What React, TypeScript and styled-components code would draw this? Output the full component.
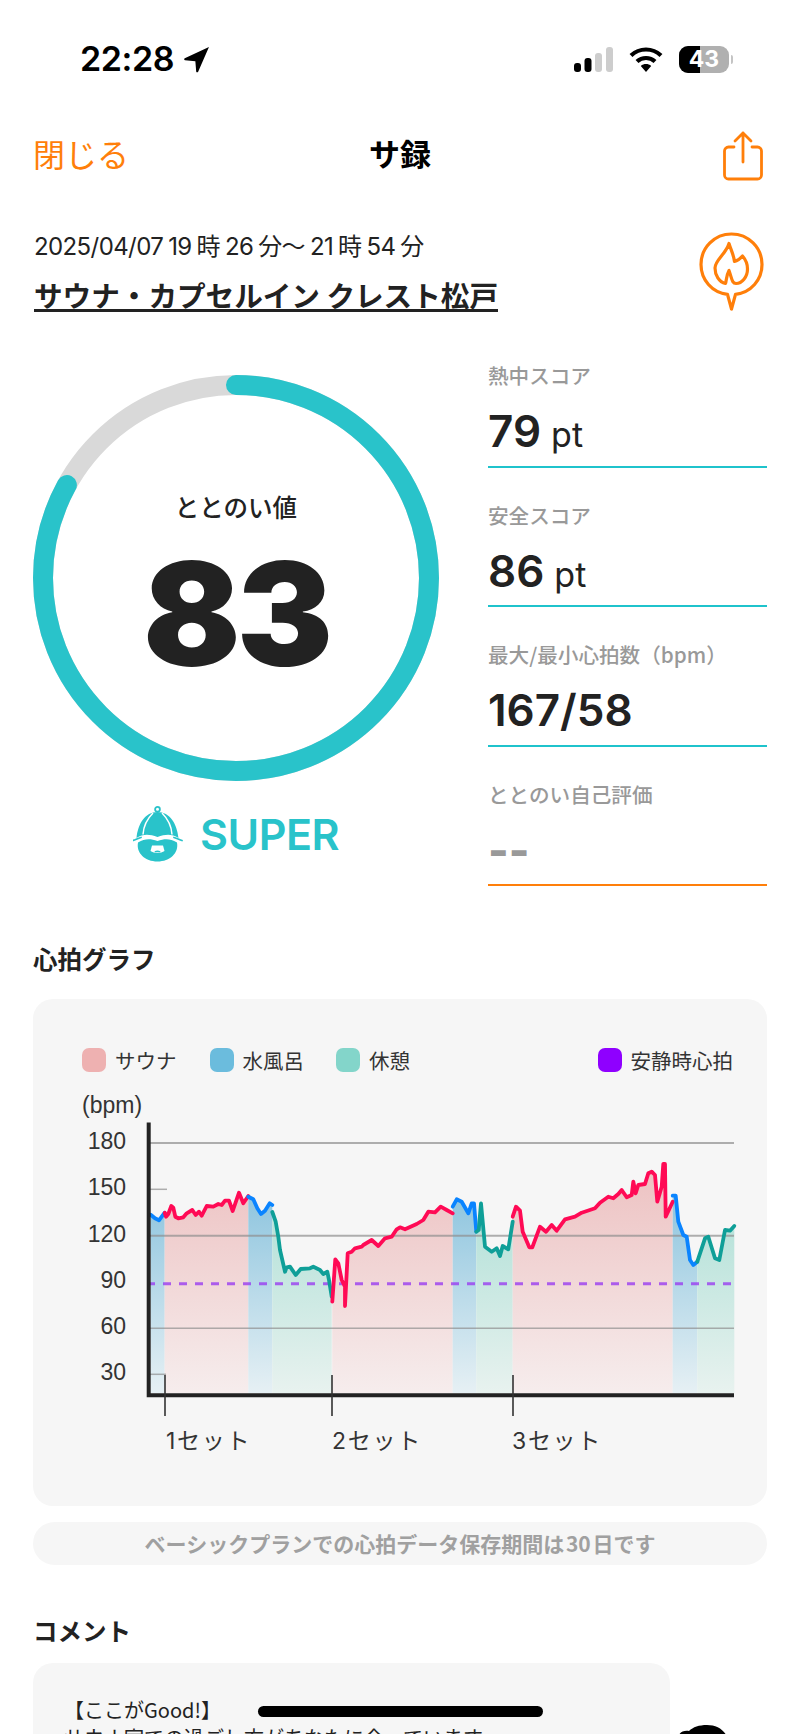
import React from "react";
import styled, { createGlobalStyle } from "styled-components";

const TEAL = "#29c3ca";
const ORANGE = "#ff7f0a";
const FONT = `"Inter", "Noto Sans CJK JP", sans-serif`;
const CJK = `"Noto Sans CJK JP", "Inter", sans-serif`;

const Global = createGlobalStyle`
  html, body { margin: 0; padding: 0; background: #fff; }
  body { font-family: ${FONT}; color: #222; }
  #root { height: 1734px; overflow: hidden; }
`;

const Page = styled.div`
  width: 800px;
  height: 1734px;
  overflow: hidden;
  background: #fff;
`;

const StatusBar = styled.div`
  height: 118px;
  display: flex;
  align-items: center;
  padding: 0 67px 0 80px;
  box-sizing: border-box;
`;
const Time = styled.div`
  font: 600 34px/40px "Inter", sans-serif;
  color: #000;
  letter-spacing: -0.4px;
`;
const LocationIcon = styled.svg`
  width: 27px;
  height: 27px;
  margin-left: 9px;
`;
const StatusRight = styled.div`
  margin-left: auto;
  display: flex;
  align-items: center;
  gap: 16px;
`;
const Battery = styled.div`
  position: relative;
  width: 50px;
  height: 27px;
  border-radius: 9px;
  overflow: hidden;
  background: #b0b0b0;
  display: flex;
  align-items: center;
  justify-content: center;
  font: 700 23px/27px "Inter", sans-serif;
  color: #fff;
  &::before {
    content: "";
    position: absolute;
    left: 0;
    top: 0;
    bottom: 0;
    width: 21px;
    background: #000;
  }
`;
const BatteryText = styled.span`
  position: relative;
`;
const BatteryWrap = styled.div`
  display: flex;
  align-items: center;
  gap: 2px;
  &::after {
    content: "";
    width: 2px;
    height: 9px;
    background: #c4c4c4;
    border-radius: 0 2px 2px 0;
  }
`;

const Header = styled.header`
  margin-top: 7px;
  height: 60px;
  padding: 0 33px;
  display: grid;
  grid-template-columns: 1fr auto 1fr;
  align-items: center;
`;
const CloseLink = styled.div`
  margin-bottom: 4px;
  font: 400 32px/44px ${CJK};
  color: ${ORANGE};
`;
const NavTitle = styled.h1`
  margin: 0 0 4px;
  font: 700 31px/44px ${CJK};
  color: #000;
`;
const ShareIcon = styled.svg`
  justify-self: end;
  width: 44px;
  height: 52px;
  margin-right: 2px;
  margin-top: 2px;
`;

const Info = styled.section`
  margin-top: 47px;
  padding: 0 33px;
  display: flex;
  justify-content: space-between;
`;
const InfoText = styled.div`
  padding-left: 1px;
`;
const DateLine = styled.div`
  font: 400 24px/30px ${FONT};
  color: #222;
  letter-spacing: -0.6px;
  word-spacing: -1.2px;
`;
const Place = styled.div`
  display: inline-block;
  margin-top: 19px;
  font: 700 28.6px/28px ${CJK};
  color: #222;
  border-bottom: 3px solid #222;
`;
const PinIcon = styled.svg`
  width: 70px;
  height: 80px;
  margin-right: -2px;
`;

const Main = styled.section`
  margin-top: 16px;
  padding: 0 33px;
  display: flex;
  justify-content: space-between;
`;
const RingColumn = styled.div`
  margin-top: 47px;
  width: 406px;
  display: flex;
  flex-direction: column;
  align-items: center;
`;
const RingWrap = styled.div`
  position: relative;
  width: 406px;
  height: 406px;
`;
const RingText = styled.div`
  position: absolute;
  inset: 0;
  display: flex;
  flex-direction: column;
  align-items: center;
`;
const RingLabel = styled.div`
  margin-top: 114px;
  font: 500 24.5px/36px ${CJK};
  color: #222;
`;
const RingValue = styled.div`
  margin-top: 4px;
  font: 900 144px/170px "Inter", sans-serif;
  color: #222;
  letter-spacing: -4px;
`;
const Rank = styled.div`
  margin-top: 25px;
  display: flex;
  align-items: center;
  gap: 17px;
  font: 600 43px/56px "Inter", sans-serif;
  letter-spacing: -0.5px;
  color: ${TEAL};
`;
const RankIcon = styled.svg`
  width: 50px;
  height: 56px;
`;

const Scores = styled.div`
  width: 279px;
`;
const ScoreRow = styled.div<{ $accent: string }>`
  height: 139.6px;
  box-sizing: border-box;
  padding-top: 33px;
  border-bottom: 2px solid ${(p) => p.$accent};
`;
const ScoreLabel = styled.div`
  font: 500 20.6px/28px ${CJK};
  color: #999;
`;
const ScoreValue = styled.div`
  margin-top: 16px;
  font: 600 44px/52px "Inter", sans-serif;
  color: #222;
`;
const ScoreUnit = styled.span`
  font-size: 34px;
  font-weight: 400;
  margin-left: 10px;
`;
const ScoreEmpty = styled.div`
  margin-top: 16px;
  font: 800 44px/52px "Inter", sans-serif;
  color: #999;
`;

const SectionTitle = styled.h2<{ $top: number }>`
  margin: ${(p) => p.$top}px 33px 0;
  font: 700 24.5px/30px ${CJK};
  color: #222;
`;
const GraphCard = styled.section`
  margin: 25px 33px 0;
  height: 507px;
  box-sizing: border-box;
  padding: 49px 34px 0 49px;
  background: #f6f6f6;
  border-radius: 20px;
`;
const Legend = styled.div`
  display: flex;
  align-items: center;
  height: 24px;
`;
const LegendItem = styled.div<{ $push?: boolean; $gap?: number }>`
  display: flex;
  align-items: center;
  gap: 9px;
  margin-left: ${(p) => (p.$push ? "auto" : `${p.$gap ?? 0}px`)};
  font: 400 20.5px/24px ${CJK};
  color: #333;
  white-space: nowrap;
`;
const Swatch = styled.span<{ $color: string }>`
  width: 24px;
  height: 24px;
  border-radius: 7px;
  background: ${(p) => p.$color};
`;
const ChartSvg = styled.svg`
  display: block;
  margin-top: 18px;
  width: 660px;
  height: 375px;
  overflow: visible;
`;
const AxisText = styled.text`
  font: 400 23px "Liberation Sans", sans-serif;
  fill: #333;
`;
const SetText = styled.text`
  font: 400 23px ${FONT};
  fill: #333;
  letter-spacing: 1.7px;
`;

const Notice = styled.div`
  margin: 16px 33px 0;
  height: 43px;
  border-radius: 22px;
  background: #f6f6f6;
  display: flex;
  align-items: center;
  justify-content: center;
  font: 700 21px/43px ${CJK};
  color: #a0a0a0;
  word-spacing: -3px;
`;

const CommentRow = styled.div`
  margin: 17px 0 0 33px;
  display: flex;
  gap: 5px;
`;
const CommentCard = styled.div`
  position: relative;
  width: 637px;
  box-sizing: border-box;
  padding: 33px 20px 40px 31px;
  background: #f6f6f6;
  border-radius: 20px;
  font: 400 20px/28px ${CJK};
  color: #222;
`;
const Redaction = styled.span`
  position: absolute;
  left: 225px;
  top: 43px;
  width: 285px;
  height: 11px;
  border-radius: 6px;
  background: #000;
`;
const Avatar = styled.svg`
  width: 56px;
  height: 56px;
  margin-top: 62px;
`;

type P = [number, number];
const z4 = (a: P[]): P[] => a.map(([x, y]) => [30 + x / 3, 1040 + y / 3]);
const z5 = (a: P[]): P[] => a.map(([x, y]) => [400 + x / 3, 1040 + y / 3]);

const BASE = 1393;
type Kind = "sauna" | "bath" | "rest";
const LINE: Record<Kind, string> = { sauna: "#ff0a55", bath: "#0a84ff", rest: "#0f9f98" };
const segments: { kind: Kind; pts: P[] }[] = [
  { kind: "bath", pts: z4([[362, 524], [375, 535], [387, 541], [395, 530], [404, 518]]) },
  { kind: "sauna", pts: z4([[404, 518], [408, 530], [415, 522], [424, 498], [430, 503], [436, 530], [445, 535], [460, 532], [470, 520], [487, 510], [497, 525], [507, 515], [515, 527], [530, 498], [550, 500], [565, 492], [575, 495], [585, 482], [597, 482], [608, 513], [627, 458], [640, 490], [655, 468]]) },
  { kind: "bath", pts: z4([[655, 470], [670, 478], [682, 505], [693, 522], [705, 512], [719, 490], [727, 495]]) },
  { kind: "rest", pts: z4([[727, 516], [737, 545], [745, 590], [750, 630], [765, 695], [770, 682], [780, 680], [797, 705], [812, 687], [840, 685], [850, 680], [870, 690], [880, 702], [892, 695], [897, 720], [905, 770]]) },
  { kind: "sauna", pts: [...z4([[907, 785], [916, 658], [925, 670], [935, 720], [945, 740], [945, 798], [953, 640], [965, 635], [975, 625], [995, 620], [1000, 615], [1025, 600], [1045, 618], [1065, 595], [1085, 590], [1100, 568], [1110, 562]]), ...z5([[15, 568], [50, 552], [70, 540], [85, 515], [105, 517], [122, 500], [140, 510], [158, 520]])] },
  { kind: "bath", pts: z5([[158, 500], [170, 478], [185, 485], [205, 520], [215, 490], [222, 490], [229, 575]]) },
  { kind: "rest", pts: z5([[229, 575], [236, 570], [243, 490], [255, 620], [275, 635], [290, 625], [300, 648], [308, 618], [325, 628], [338, 545]]) },
  { kind: "sauna", pts: z5([[338, 530], [348, 500], [360, 512], [368, 575], [388, 622], [397, 622], [420, 560], [438, 575], [455, 555], [470, 572], [495, 538], [525, 530], [545, 518], [585, 505], [600, 488], [625, 470], [640, 475], [655, 462], [665, 450], [680, 472], [695, 465], [700, 425], [707, 460], [715, 435], [735, 432], [745, 400], [755, 395], [765, 405], [772, 485], [785, 440], [790, 372], [795, 372], [797, 530], [818, 485]]) },
  { kind: "bath", pts: z5([[818, 467], [827, 467], [835, 545], [850, 585], [860, 590], [870, 660], [880, 675], [892, 665]]) },
  { kind: "rest", pts: z5([[892, 665], [915, 595], [925, 590], [945, 655], [958, 660], [975, 570], [990, 572], [1003, 558]]) },
];
const str = (pts: P[]) => pts.map((p) => p.map((n) => n.toFixed(1)).join(",")).join(" ");

const scores = [
  { label: "熱中スコア", value: "79", unit: "pt" },
  { label: "安全スコア", value: "86", unit: "pt" },
  { label: "最大/最小心拍数（bpm）", value: "167/58" },
];

const ticks = [
  { v: "180", y: 1143, w: 734, s: 2 },
  { v: "150", y: 1189.3, w: 167, s: 1.5 },
  { v: "120", y: 1235.7, w: 734, s: 2 },
  { v: "90", y: 1282, w: 147, s: 0 },
  { v: "60", y: 1328.3, w: 734, s: 1.5 },
  { v: "30", y: 1374.3, w: 166, s: 1.5 },
];

function Chart() {
  return (
    <ChartSvg viewBox="82 1090 660 375">
      <defs>
        <linearGradient id="g-sauna" gradientUnits="userSpaceOnUse" x1="0" y1="1170" x2="0" y2={BASE}>
          <stop offset="0" stopColor="#edc2c2" />
          <stop offset="1" stopColor="#f6eded" />
        </linearGradient>
        <linearGradient id="g-bath" gradientUnits="userSpaceOnUse" x1="0" y1="1190" x2="0" y2={BASE}>
          <stop offset="0" stopColor="#8cc4de" />
          <stop offset="1" stopColor="#e6f0f4" />
        </linearGradient>
        <linearGradient id="g-rest" gradientUnits="userSpaceOnUse" x1="0" y1="1200" x2="0" y2={BASE}>
          <stop offset="0" stopColor="#b0e0d7" />
          <stop offset="1" stopColor="#e8f2ef" />
        </linearGradient>
      </defs>
      {segments.map((s, i) => {
        const a = s.pts[0][0];
        const b = s.pts[s.pts.length - 1][0];
        return <polygon key={i} fill={`url(#g-${s.kind})`} points={`${a},${BASE} ${str(s.pts)} ${b},${BASE}`} />;
      })}
      {ticks.filter((t) => t.s > 0).map((t) => (
        <line key={t.v} x1="147" x2={t.w} y1={t.y} y2={t.y} stroke="#8f8f8f" strokeOpacity="0.7" strokeWidth={t.s} />
      ))}
      <line x1="147" x2="734" y1="1283.7" y2="1283.7" stroke="#9a3df0" strokeOpacity="0.8" strokeWidth="3" strokeDasharray="8 8" />
      {segments.map((s, i) => (
        <polyline key={i} fill="none" stroke={LINE[s.kind]} strokeWidth="3.8" strokeLinejoin="round" strokeLinecap="round" points={str(s.pts)} />
      ))}
      <path d="M148.7 1122.5V1395.3H734" fill="none" stroke="#222" strokeWidth="4" />
      {[165, 332, 513].map((x) => (
        <line key={x} x1={x} x2={x} y1="1375" y2="1416" stroke="#333" strokeWidth="1.6" />
      ))}
      <AxisText x="82" y="1113">(bpm)</AxisText>
      {ticks.map((t) => (
        <AxisText key={t.v} x="126" y={t.y + 6} textAnchor="end">{t.v}</AxisText>
      ))}
      <SetText x="166" y="1449">1セット</SetText>
      <SetText x="332" y="1449">2セット</SetText>
      <SetText x="512" y="1449">3セット</SetText>
    </ChartSvg>
  );
}

export default function App() {
  return (
    <Page>
      <Global />
      <StatusBar>
        <Time>22:28</Time>
        <LocationIcon viewBox="0 0 26 26">
          <path d="M25 1 14.600 24.800c-.4.9-1.800.7-1.900-.3l-.8-9.900-9.900-.8c-1-.1-1.200-1.500-.3-1.900Z" fill="#000" />
        </LocationIcon>
        <StatusRight>
          <svg width="39" height="25" viewBox="0 0 39 25">
            <rect x="0" y="16" width="7" height="9" rx="3" fill="#000" />
            <rect x="10.500" y="11" width="7" height="14" rx="3" fill="#000" />
            <rect x="21" y="6" width="7" height="19" rx="3" fill="#cdcdcd" />
            <rect x="32" y="0" width="7" height="25" rx="3" fill="#cdcdcd" />
          </svg>
          <svg width="34" height="25" viewBox="0 0 34 25">
            <path d="M2 8.500C10.500.5 23.500.5 32 8.500" fill="none" stroke="#000" strokeWidth="4.200" />
            <path d="M8 14.500C13 9.800 21 9.800 26 14.500" fill="none" stroke="#000" strokeWidth="4.200" />
            <path d="M11.800 19 17 25l5.200-6c-3-2.600-7.400-2.600-10.400 0Z" fill="#000" />
          </svg>
          <BatteryWrap>
            <Battery><BatteryText>43</BatteryText></Battery>
          </BatteryWrap>
        </StatusRight>
      </StatusBar>

      <Header>
        <CloseLink>閉じる</CloseLink>
        <NavTitle>サ録</NavTitle>
        <ShareIcon viewBox="0 0 44 52" fill="none" stroke={ORANGE} strokeWidth="2.800" strokeLinecap="round" strokeLinejoin="round">
          <path d="M13 17H7.500a4 4 0 0 0-4 4v24a4 4 0 0 0 4 4h29a4 4 0 0 0 4-4V21a4 4 0 0 0-4-4H31" />
          <path d="M22 32V3M14 11l8-8 8 8" />
        </ShareIcon>
      </Header>

      <Info>
        <InfoText>
          <DateLine>2025/04/07 19 時 26 分〜 21 時 54 分</DateLine>
          <Place>サウナ・カプセルイン クレスト松戸</Place>
        </InfoText>
        <PinIcon viewBox="0 0 70 80" fill="none" stroke={ORANGE} strokeWidth="3.200" strokeLinejoin="round" strokeLinecap="round">
          <path d="M28.500 62.300C13 60.500 2 47.800 2 32.500 2 15.600 15.600 2 32.500 2S63 15.600 63 32.500c0 15.300-11 28-26.500 29.800L32.500 77Z" />
          <path d="M30 11.500C32 18 35 24 35.500 29.500 38 29 41 27 43.500 24 47 28 48.500 33 48.500 37 48.500 45 43 51.500 37 51.500 33 51.500 33 47 30 38.500 27 44 27.500 49 26.500 51.500 20 50 16 43 16 36 16 28 27 22 30 11.500Z" />
        </PinIcon>
      </Info>

      <Main>
        <RingColumn>
          <RingWrap>
            <svg width="406" height="406" viewBox="0 0 406 406">
              <circle cx="203" cy="203" r="193" fill="none" stroke="#d9d9d9" strokeWidth="20" />
              <circle cx="203" cy="203" r="193" fill="none" stroke={TEAL} strokeWidth="20" strokeLinecap="round" pathLength="100" strokeDasharray="83 100" transform="rotate(-90 203 203)" />
            </svg>
            <RingText>
              <RingLabel>ととのい値</RingLabel>
              <RingValue>83</RingValue>
            </RingText>
          </RingWrap>
          <Rank>
            <RankIcon viewBox="0 0 50 56">
              <circle cx="24.500" cy="3.300" r="2.400" fill="none" stroke={TEAL} strokeWidth="1.800" />
              <path d="M24.500 6C12 6 5 18 3.500 32 10 28 16 28 24.500 31 33 28 39 28 45.500 32 44 18 37 6 24.500 6Z" fill={TEAL} />
              <path d="M20 7C14 13 10.500 20 10 28.500M29 7C35 13 38.500 20 39 28.500" fill="none" stroke="#fff" strokeWidth="1.500" />
              <path d="M0 34.500C3 33.500 4.500 32.500 8 31.500M41 31.500C44.500 32.500 46 33.500 49 34.500" fill="none" stroke={TEAL} strokeWidth="1.800" strokeLinecap="round" />
              <path d="M5 36.500C12 32.500 17 32.500 24.500 35 32 32.500 37 32.500 44 36.500 46 47 37 55.500 24.500 55.500 12 55.500 3 47 5 36.500Z" fill={TEAL} />
              <path d="M19 39.500H30L31.500 45C28 47.500 21 47.500 17.500 45Z" fill="#fff" />
              <path d="M21.500 45.200C23.500 44.300 25.500 44.300 27.500 45.200L27 46.300H22Z" fill={TEAL} />
            </RankIcon>
            SUPER
          </Rank>
        </RingColumn>
        <Scores>
          {scores.map((s) => (
            <ScoreRow key={s.label} $accent="#1fc3cc">
              <ScoreLabel>{s.label}</ScoreLabel>
              <ScoreValue>
                {s.value}
                {s.unit && <ScoreUnit>{s.unit}</ScoreUnit>}
              </ScoreValue>
            </ScoreRow>
          ))}
          <ScoreRow $accent={ORANGE}>
            <ScoreLabel>ととのい自己評価</ScoreLabel>
            <ScoreEmpty>--</ScoreEmpty>
          </ScoreRow>
        </Scores>
      </Main>

      <SectionTitle $top={58}>心拍グラフ</SectionTitle>
      <GraphCard>
        <Legend>
          <LegendItem><Swatch $color="#eeb1b1" />サウナ</LegendItem>
          <LegendItem $gap={33}><Swatch $color="#6bbcdd" />水風呂</LegendItem>
          <LegendItem $gap={32}><Swatch $color="#83d5ca" />休憩</LegendItem>
          <LegendItem $push><Swatch $color="#8f00ff" />安静時心拍</LegendItem>
        </Legend>
        <Chart />
      </GraphCard>
      <Notice>ベーシックプランでの心拍データ保存期間は 30 日です</Notice>

      <SectionTitle $top={51}>コメント</SectionTitle>
      <CommentRow>
        <CommentCard>
          【ここがGood!】
          <Redaction />
          <br />
          サウナ室での過ごし方があなたに合っています
        </CommentCard>
        <Avatar viewBox="0 0 56 56">
          <path d="M3 14C3 8 8 5 14 6 18 2 24 0 32 0c10 0 18 5 21 14 3 12-4 30-25 30S0 26 3 14Z" fill="#000" />
        </Avatar>
      </CommentRow>
    </Page>
  );
}
